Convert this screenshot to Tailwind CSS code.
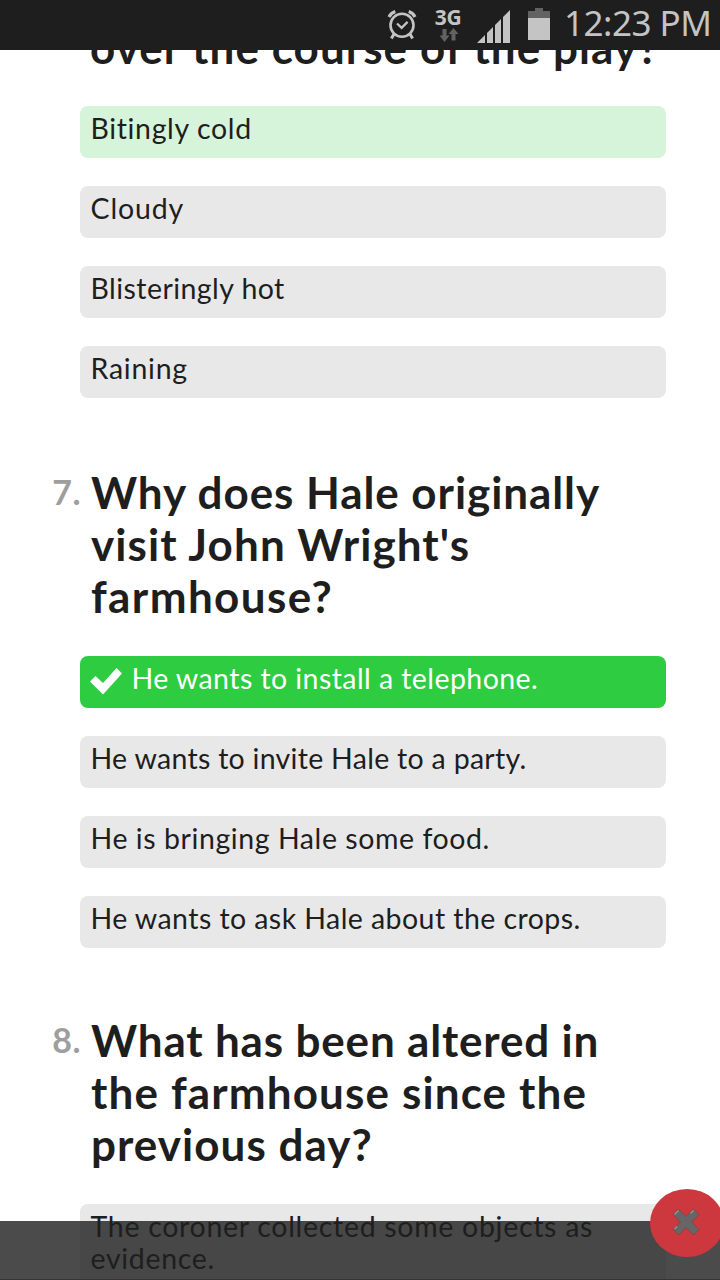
<!DOCTYPE html>
<html lang="en">
  <head>
    <meta charset="UTF-8" />
    <meta name="viewport" content="width=device-width, initial-scale=1" />
    <title>Trifles Quiz</title>
    <script src="https://cdn.jsdelivr.net/npm/@tailwindcss/browser@4"></script>
  </head>
  <body
    class="relative h-[1280px] w-[720px] overflow-hidden bg-white font-['Lato',sans-serif] text-[#1e1e1e]"
  >
    <!-- Status bar -->
    <header
      class="flex h-[50px] bg-[#1e1e1e] pl-[387px] font-['Noto_Sans',sans-serif] text-[#c4c4c4]"
    >
      <svg class="mt-2 h-8 w-[30px] shrink-0" viewBox="0 0 30 32" fill="none" stroke="currentColor">
        <circle cx="15" cy="17.3" r="11.5" stroke-width="2.6" />
        <path d="M10 15.5l4.6 4.4 6-6" stroke-width="2.2" />
        <path d="M2 9Q4 5 8.3 3.6M28 9Q26 5 21.7 3.6" stroke-width="3.2" />
        <path d="M7 26l-2.6 4.6M23 26l2.6 4.6" stroke-width="3" />
      </svg>
      <div class="ml-[17px] flex w-7 shrink-0 flex-col items-center">
        <span class="mt-[7px] text-[21px] leading-[21px] font-bold tracking-[-0.4px]">3G</span>
        <svg class="ml-[2px] h-[14px] w-5" viewBox="0 0 20 14" fill="#626262">
          <path d="M3.5 1h4v6.5h3L5.5 14 .5 7.500h3z" />
          <path d="M12.500 12.500h4V6h3L14.500 0l-5 6h3z" />
        </svg>
      </div>
      <svg class="mt-[10px] ml-[15px] h-[33px] w-[33px] shrink-0" viewBox="0 0 33 33" fill="currentColor">
        <path d="M0 33L8 25v8zM10 33V23l6-6v16zM18 33V15l6-6v24zM26 33V7l7-7v33z" />
      </svg>
      <svg class="mt-2 ml-[18px] h-8 w-[22px] shrink-0" viewBox="0 0 22 32">
        <path fill="#626262" d="M7 0h8v3h7v7H0V3h7z" />
        <path fill="currentColor" d="M0 10h22v22H0z" />
      </svg>
      <span class="ml-[14px] text-[35px] leading-[46px] tracking-[-0.5px] whitespace-nowrap">12:23 PM</span>
    </header>

    <!-- Scrolled quiz content -->
    <main class="h-[1230px] overflow-hidden pr-[54px]">
      <section class="-mt-[29px]">
        <h2 class="mb-[33px] pl-[90px] text-[44px] leading-[52px] font-bold whitespace-nowrap">
          <span class="block tracking-[1.06px]">over the course of the play?</span>
        </h2>
        <ul class="ml-20 space-y-7 text-[28.5px] leading-8 whitespace-nowrap">
          <li class="h-[52px] rounded-lg bg-[#d6f4d9] pt-[6px] pl-[10.5px] tracking-[0.64px]">Bitingly cold</li>
          <li class="h-[52px] rounded-lg bg-[#e8e8e8] pt-[6px] pl-[10.5px] tracking-[0.84px]">Cloudy</li>
          <li class="h-[52px] rounded-lg bg-[#e8e8e8] pt-[6px] pl-[10.5px] tracking-[0.44px]">Blisteringly hot</li>
          <li class="h-[52px] rounded-lg bg-[#e8e8e8] pt-[6px] pl-[10.5px] tracking-[0.76px]">Raining</li>
        </ul>
      </section>

      <section class="mt-[68px]">
        <div class="mb-[34px] flex">
          <span class="w-[91px] shrink-0 pr-[10px] text-right text-[34px] leading-[51px] font-bold tracking-[0.5px] text-[#9e9e9e]">7.</span>
          <h2 class="text-[44px] leading-[52px] font-bold whitespace-nowrap">
            <span class="block tracking-[0.92px]">Why does Hale originally</span>
            <span class="block tracking-[1.1px]">visit John Wright's</span>
            <span class="block tracking-[1.4px]">farmhouse?</span>
          </h2>
        </div>
        <ul class="ml-20 space-y-7 text-[28.5px] leading-8 whitespace-nowrap">
          <li class="flex h-[52px] rounded-lg bg-[#2ecc40] pt-[6px] pl-[10px] tracking-[0.43px] text-white">
            <svg class="mt-[6px] mr-[9.5px] h-[27px] w-8 shrink-0" viewBox="0 0 32 27" fill="currentColor">
              <path d="M0 13.500L5.500 8l7.500 7L26.500 0 32 5.500 13 26.500z" />
            </svg>
            He wants to install a telephone.
          </li>
          <li class="h-[52px] rounded-lg bg-[#e8e8e8] pt-[6px] pl-[10.5px] tracking-[0.29px]">He wants to invite Hale to a party.</li>
          <li class="h-[52px] rounded-lg bg-[#e8e8e8] pt-[6px] pl-[10.5px] tracking-[0.57px]">He is bringing Hale some food.</li>
          <li class="h-[52px] rounded-lg bg-[#e8e8e8] pt-[6px] pl-[10.5px] tracking-[0.43px]">He wants to ask Hale about the crops.</li>
        </ul>
      </section>

      <section class="mt-[66px]">
        <div class="mb-[34px] flex">
          <span class="w-[91px] shrink-0 pr-[10px] text-right text-[34px] leading-[51px] font-bold tracking-[0.5px] text-[#9e9e9e]">8.</span>
          <h2 class="text-[44px] leading-[52px] font-bold whitespace-nowrap">
            <span class="block tracking-[0.83px]">What has been altered in</span>
            <span class="block tracking-[1.13px]">the farmhouse since the</span>
            <span class="block tracking-[1.04px]">previous day?</span>
          </h2>
        </div>
        <ul class="ml-20 text-[28.5px] leading-8 whitespace-nowrap">
          <li class="h-[84px] rounded-lg bg-[#e8e8e8] pt-[6px] pl-[10.5px]">
            <span class="block tracking-[0.7px]">The coroner collected some objects as</span>
            <span class="block tracking-[0.69px]">evidence.</span>
          </li>
        </ul>
      </section>
    </main>

    <!-- Bottom ad strip with its close button -->
    <div class="absolute inset-x-0 top-[1221px] h-[59px] border-b border-[#3b3236] bg-[#1e1e1e]/80"></div>
    <button
      class="absolute top-[1189px] left-[650px] flex h-[68px] w-[74px] items-center justify-center rounded-[50%] bg-[#cc383e]"
      aria-label="Close"
    >
      <svg class="-mt-[2px] -ml-[2px] h-7 w-7" viewBox="0 0 28 28">
        <path
          d="M6.500 1L14 8.500 21.500 1 27 6.500 19.500 14 27 21.500 21.500 27 14 19.500 6.500 27 1 21.500 8.500 14 1 6.500z"
          fill="#666"
          stroke="#80484a"
          stroke-linejoin="round"
        />
        <path d="M2.500 6.500l4-4M18.500 5.500l3-3M2.500 21l2.500-2.500" fill="none" stroke="#999" stroke-width="1.200" />
      </svg>
    </button>
  </body>
</html>
